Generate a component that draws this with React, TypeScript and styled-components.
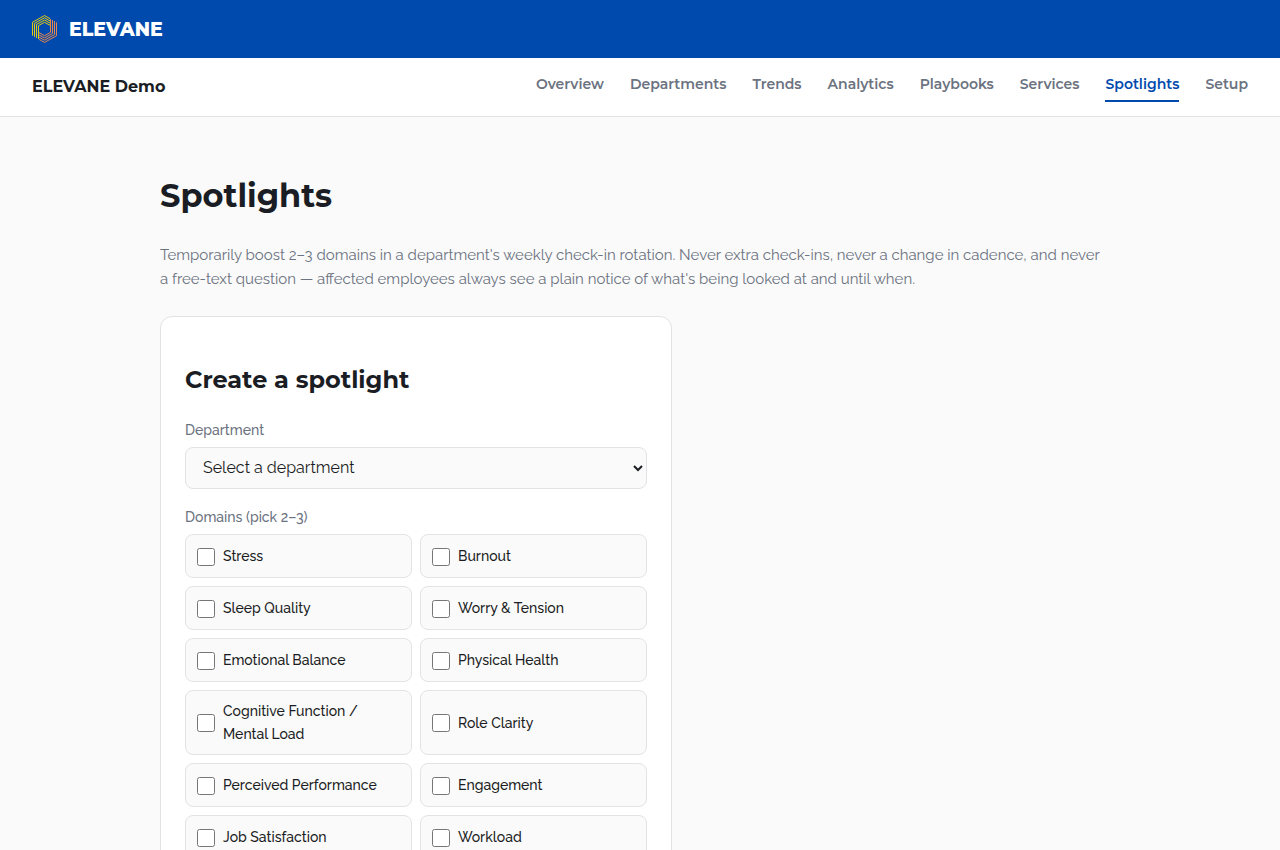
import React from "react";
import styled, { createGlobalStyle } from "styled-components";

const heading = `Montserrat, Inter, "Open Sans", sans-serif`;
const body = `Raleway, Lato, "Open Sans", sans-serif`;

const GlobalStyle = createGlobalStyle`
  *, *::before, *::after { box-sizing: border-box; }
  body {
    margin: 0;
    background: #fafafa;
    color: #1a1d23;
    font-family: ${body};
    font-size: 16px;
  }
`;

const BrandBar = styled.header`
  display: flex;
  align-items: center;
  gap: 12px;
  height: 58px;
  padding: 0 32px;
  background: #004aad;
`;

const BrandName = styled.span`
  color: #fff;
  font-family: ${heading};
  font-size: 19px;
  font-weight: 800;
`;

const NavBar = styled.div`
  display: flex;
  align-items: center;
  justify-content: space-between;
  padding: 14px 32px;
  background: #fff;
  border-bottom: 1px solid #e2e3e5;
`;

const OrgName = styled.strong`
  font-family: ${heading};
  font-size: 16px;
  font-weight: 700;
  line-height: 24px;
`;

const NavLinks = styled.nav`
  display: flex;
  gap: 26px;
`;

const NavLink = styled.a<{ $active?: boolean }>`
  padding-bottom: 4px;
  border-bottom: 2px solid ${(p) => (p.$active ? "#004aad" : "transparent")};
  color: ${(p) => (p.$active ? "#004aad" : "#6b7280")};
  font-family: ${heading};
  font-size: 14px;
  font-weight: 600;
  line-height: 24px;
  text-decoration: none;
`;

const Main = styled.main`
  max-width: 960px;
  margin: 0 auto;
  padding: 56px 0 48px;
`;

const Title = styled.h1`
  margin: 0 0 24px;
  font-family: ${heading};
  font-size: 32px;
  font-weight: 700;
  line-height: 46px;
`;

const Intro = styled.p`
  max-width: 944px;
  margin: 0 0 25px;
  color: #6b7280;
  font-size: 15px;
  line-height: 24px;
`;

const Card = styled.section`
  max-width: 512px;
  padding: 44px 24px 24px;
  background: #fff;
  border: 1px solid #e2e3e5;
  border-radius: 12px;
`;

const CardTitle = styled.h2`
  margin: 0 0 20px;
  font-family: ${heading};
  font-size: 24px;
  font-weight: 700;
  line-height: 38px;
`;

const Field = styled.div`
  margin-bottom: 17px;
`;

const FieldLabel = styled.label`
  display: block;
  margin-bottom: 5px;
  padding: 0;
  color: #6b7280;
  font-size: 14px;
  font-weight: 500;
  line-height: 23px;
`;

const Select = styled.select`
  display: block;
  width: 100%;
  height: 42px;
  padding: 0 13px 2px;
  background: #fafafa;
  border: 1px solid #e2e3e5;
  border-radius: 8px;
  color: #1a1d23;
  font-family: ${body};
  font-size: 16px;
`;

const Group = styled.fieldset`
  min-width: 0;
  margin: 0;
  padding: 0;
  border: 0;
`;

const Options = styled.div`
  display: grid;
  grid-template-columns: 1fr 1fr;
  gap: 8px;
`;

const Option = styled.label`
  display: flex;
  align-items: center;
  gap: 8px;
  min-height: 44px;
  padding: 9px 11px 8px;
  background: #fafafa;
  border: 1px solid #e2e3e5;
  border-radius: 8px;
  font-size: 14px;
  font-weight: 500;
  line-height: 23px;
`;

const Checkbox = styled.input`
  flex: none;
  width: 18px;
  height: 18px;
  margin: 0;
`;

const LINKS = ["Overview", "Departments", "Trends", "Analytics", "Playbooks", "Services", "Spotlights", "Setup"];

const DOMAINS = [
  "Stress",
  "Burnout",
  "Sleep Quality",
  "Worry & Tension",
  "Emotional Balance",
  "Physical Health",
  "Cognitive Function / Mental Load",
  "Role Clarity",
  "Perceived Performance",
  "Engagement",
  "Job Satisfaction",
  "Workload",
];

/* Half-widths of the nested hexagon bands; each band is half yellow, half orange. */
const BANDS = [12, 10, 8, 6];
const SLOPE = 0.56;

function bandPath(w: number) {
  const top = 14 - w * 1.12;
  const foot = 14 + 13.4 - w * SLOPE;
  return `M${12.5 - w} ${foot}V${top + w * SLOPE}L12.5 ${top}L18 ${top + 5.5 * SLOPE}`;
}

function Logo() {
  return (
    <svg width="25" height="28" viewBox="0 0 25 28" fill="none" strokeWidth="1" aria-hidden="true">
      <g stroke="#dfc812">
        {BANDS.map((w) => (
          <path key={w} d={bandPath(w)} />
        ))}
      </g>
      <g stroke="#e5854f" transform="rotate(180 12.5 14)">
        {BANDS.map((w) => (
          <path key={w} d={bandPath(w)} />
        ))}
      </g>
    </svg>
  );
}

export default function App() {
  return (
    <>
      <GlobalStyle />
      <BrandBar>
        <Logo />
        <BrandName>ELEVANE</BrandName>
      </BrandBar>
      <NavBar>
        <OrgName>ELEVANE Demo</OrgName>
        <NavLinks>
          {LINKS.map((name) => (
            <NavLink key={name} href={`#${name.toLowerCase()}`} $active={name === "Spotlights"}>
              {name}
            </NavLink>
          ))}
        </NavLinks>
      </NavBar>
      <Main>
        <Title>Spotlights</Title>
        <Intro>
          Temporarily boost 2–3 domains in a department's weekly check-in rotation. Never extra check-ins, never a
          change in cadence, and never a free-text question — affected employees always see a plain notice of what's
          being looked at and until when.
        </Intro>
        <Card>
          <CardTitle>Create a spotlight</CardTitle>
          <Field>
            <FieldLabel htmlFor="department">Department</FieldLabel>
            <Select id="department" defaultValue="">
              <option value="">Select a department</option>
            </Select>
          </Field>
          <Group>
            <FieldLabel as="legend">Domains (pick 2–3)</FieldLabel>
            <Options>
              {DOMAINS.map((name) => (
                <Option key={name}>
                  <Checkbox type="checkbox" name="domains" value={name} />
                  {name}
                </Option>
              ))}
            </Options>
          </Group>
        </Card>
      </Main>
    </>
  );
}
